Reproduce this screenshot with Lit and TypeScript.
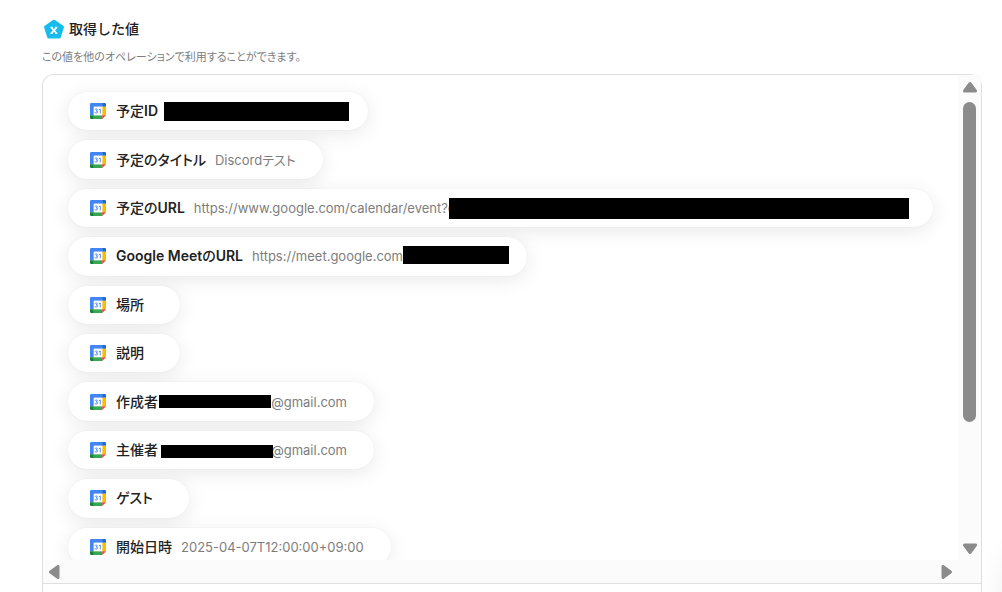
import { LitElement, html, css, svg, nothing } from "lit";
import { customElement, property } from "lit/decorators.js";
import { styleMap } from "lit/directives/style-map.js";

interface Mask {
  left: number;
  top: number;
  width: number;
  height: number;
}

interface Item {
  label: string;
  value?: string;
  valueWidth?: number;
  alignEnd?: boolean;
  mask?: Mask;
}

const ITEMS: Item[] = [
  { label: "予定ID", valueWidth: 174, mask: { left: 96, top: 10, width: 185, height: 19 } },
  { label: "予定のタイトル", value: "Discordテスト" },
  {
    label: "予定のURL",
    value: "https://www.google.com/calendar/event?e",
    valueWidth: 712,
    mask: { left: 381, top: 9, width: 460, height: 21 },
  },
  {
    label: "Google MeetのURL",
    value: "https://meet.google.com",
    valueWidth: 248,
    mask: { left: 335, top: 9, width: 106, height: 18 },
  },
  { label: "場所" },
  { label: "説明" },
  {
    label: "作成者",
    value: "@gmail.com",
    valueWidth: 180,
    alignEnd: true,
    mask: { left: 91, top: 13, width: 112, height: 13 },
  },
  {
    label: "主催者",
    value: "@gmail.com",
    valueWidth: 180,
    alignEnd: true,
    mask: { left: 93, top: 14, width: 112, height: 13 },
  },
  { label: "ゲスト" },
  { label: "開始日時", value: "2025-04-07T12:00:00+09:00" },
];

const calendarIcon = html`<svg class="icon" viewBox="0 0 16 16" aria-hidden="true">
  <path fill="#4285f4" d="M1.3 0H12.2V3.8H3.8V12.2H0V1.3Q0 0 1.3 0Z" />
  <path fill="#1967d2" d="M12.2 0H14.7Q16 0 16 1.3V3.8H12.2Z" />
  <path fill="#fbbc04" d="M12.2 3.8H16V12.2H12.2Z" />
  <path fill="#34a853" d="M3.8 12.2H12.2V16H3.8Z" />
  <path fill="#188038" d="M0 12.2H3.8V16H1.3Q0 16 0 14.7Z" />
  <path fill="#ea4335" d="M12.2 12.2H16L12.2 16Z" />
  <path fill="#fff" d="M3.8 3.8H12.2V12.2H3.8Z" />
  <path
    fill="none"
    stroke="#4285f4"
    stroke-width="0.9"
    d="M5 6.8Q5.2 6 6.2 6Q7.4 6.1 7.4 7Q7.3 7.8 6.1 7.9Q7.6 8 7.6 9.1Q7.4 10.1 6.2 10.1Q5 10.1 4.8 9.2M8.8 6.8L10.3 6V10.4"
  />
</svg>`;

@customElement("value-pill")
export class ValuePill extends LitElement {
  @property({ attribute: false }) item!: Item;

  static styles = css`
    :host {
      display: flex;
      position: relative;
      align-items: center;
      box-sizing: border-box;
      padding: 0 27px 0 22px;
      border-radius: 20px;
      background: #fff;
      box-shadow: 0 4px 20px rgba(0, 0, 0, 0.09), 0 0 2px rgba(0, 0, 0, 0.06);
      white-space: nowrap;
    }
    .icon {
      width: 16px;
      height: 16px;
      flex: none;
      margin-right: 10px;
    }
    .label {
      margin-right: 9px;
      font-family: Inter, "Noto Sans CJK JP Medium", "Noto Sans CJK JP", sans-serif;
      font-size: 14px;
      font-weight: 600;
      line-height: 22px;
      color: #222;
    }
    .value {
      box-sizing: border-box;
      font-size: 13px;
      line-height: 20px;
      color: #7d7d7d;
    }
    .end {
      text-align: right;
    }
    .mask {
      position: absolute;
      background: #000;
    }
  `;

  render() {
    const { label, value, valueWidth, alignEnd, mask } = this.item;
    return html`${calendarIcon}<span class="label">${label}</span
      ><span
        class="value ${alignEnd ? "end" : ""}"
        style=${styleMap(valueWidth ? { width: `${valueWidth}px` } : {})}
        >${value ?? nothing}</span
      >${mask
        ? html`<span
            class="mask"
            style=${styleMap({
              left: `${mask.left}px`,
              top: `${mask.top}px`,
              width: `${mask.width}px`,
              height: `${mask.height}px`,
            })}
          ></span>`
        : nothing}`;
  }
}

const arrow = (label: string, d: string) => html`<button class="arrow" aria-label=${label}>
  <svg viewBox="0 0 14 14" width="14" height="14">
    ${svg`<path d=${d} fill="#8b8b8b" stroke="#8b8b8b" stroke-width="3" stroke-linejoin="round" />`}
  </svg>
</button>`;

@customElement("app-root")
export class AppRoot extends LitElement {
  static styles = css`
    :host {
      display: flex;
      flex-direction: column;
      position: relative;
      box-sizing: border-box;
      height: 100vh;
      overflow: hidden;
      padding: 18px 20px 0 42px;
      background: #fff;
      color: #222;
      font-family: Inter, "Noto Sans CJK JP", sans-serif;
      font-feature-settings: "palt";
      font-synthesis: none;
    }
    .head {
      display: flex;
      align-items: center;
      gap: 5px;
    }
    .badge {
      width: 22px;
      height: 22px;
    }
    .title {
      margin: 0;
      font-family: Inter, "Noto Sans CJK JP Medium", "Noto Sans CJK JP", sans-serif;
      font-feature-settings: normal;
      font-size: 14px;
      line-height: 22px;
      font-weight: 600;
    }
    .note {
      margin: 8px 0;
      font-size: 11px;
      line-height: 18px;
      color: #7d7d7d;
    }
    .panel {
      flex: 1 0 auto;
      border: 1px solid #e0e0e0;
      border-bottom: 0;
      border-radius: 12px 12px 0 0;
    }
    .scroller {
      display: grid;
      grid-template-columns: minmax(0, 1fr) 23px;
      grid-template-rows: 485px 23px;
      border-bottom: 1px solid #e0e0e0;
    }
    .view {
      overflow: hidden;
      border-radius: 12px 0 0 0;
      padding: 17px 25px 0;
    }
    .list {
      display: grid;
      grid-auto-rows: 1fr;
      justify-items: start;
      gap: 10px;
      min-height: 474px;
      margin: 0;
      padding: 0;
      list-style: none;
    }
    .row {
      display: flex;
    }
    .track {
      display: flex;
      align-items: center;
      background: #fbfbfb;
    }
    .vertical {
      flex-direction: column;
      padding: 5px 0 4px;
    }
    .horizontal {
      justify-content: space-between;
      padding: 0 5px;
    }
    .corner {
      background: #fbfbfb;
    }
    .lane {
      flex: 1;
      padding-top: 8px;
    }
    .thumb {
      width: 13px;
      height: 320px;
      border-radius: 7px;
      background: #8b8b8b;
    }
    .arrow {
      display: block;
      padding: 0;
      border: 0;
      background: none;
      line-height: 0;
    }
    .glow {
      position: absolute;
      right: -40px;
      bottom: -40px;
      width: 30px;
      height: 70px;
      box-shadow: 0 0 36px rgba(0, 0, 0, 0.12);
    }
  `;

  render() {
    return html`
      <header class="head">
        <svg class="badge" viewBox="0 0 22 22" aria-hidden="true">
          <path
            d="M12 3.4L20.2 9.2L17.2 18.8H6.8L3.8 9.2Z"
            fill="#16bdec"
            stroke="#16bdec"
            stroke-width="3.4"
            stroke-linejoin="round"
          />
          <path d="M9.2 9.3L14.6 15.5M14.6 9.3L9.2 15.5" stroke="#fff" stroke-width="1.8" />
          <path d="M8.4 9.3H10.8M13.1 9.3H15.4M8.4 15.5H10.6M13 15.5H15.4" stroke="#fff" stroke-width="1" />
        </svg>
        <h2 class="title">取得した値</h2>
      </header>
      <p class="note">この値を他のオペレーションで利用することができます。</p>
      <section class="panel">
        <div class="scroller">
          <div class="view">
            <ul class="list">
              ${ITEMS.map(
                (item) => html`<li class="row"><value-pill .item=${item}></value-pill></li>`
              )}
            </ul>
          </div>
          <div class="track vertical">
            ${arrow("上へスクロール", "M7 3.5L12.5 11H1.5Z")}
            <div class="lane"><div class="thumb"></div></div>
            ${arrow("下へスクロール", "M7 10.5L12.5 3H1.5Z")}
          </div>
          <div class="track horizontal">
            ${arrow("左へスクロール", "M2.5 7L10 1.5V12.5Z")}
            ${arrow("右へスクロール", "M11.5 7L4 1.5V12.5Z")}
          </div>
          <div class="corner"></div>
        </div>
      </section>
      <div class="glow"></div>
    `;
  }
}
